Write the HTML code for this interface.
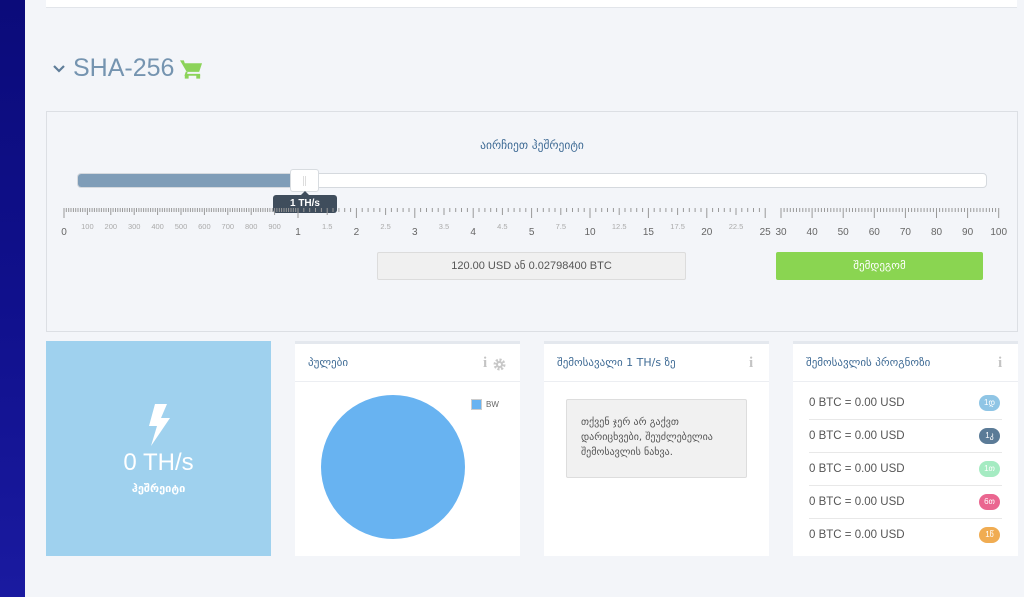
<!DOCTYPE html>
<html><head><meta charset="utf-8"><style>
*{margin:0;padding:0;box-sizing:border-box}
body{width:1024px;height:597px;overflow:hidden;background:#f3f5f9;font-family:"Liberation Sans","DejaVu Sans",sans-serif;position:relative}
.abs{position:absolute}
.side{left:0;top:0;width:25px;height:597px;background:linear-gradient(180deg,#0b0b7a,#10108c 50%,#1a1aa0)}
.top{left:46px;top:0;width:971px;height:8px;background:#fff;border-bottom:1px solid #e2e5ea}
.hdr{left:73px;top:54px;font-size:25px;color:#7594b0}
.panel{left:46px;top:111px;width:972px;height:221px;border:1px solid #dcdfe4;background:#f3f5f9}
.title{left:0;width:1064px;top:138px;text-align:center;font-size:11.5px;color:#3f6b95;font-family:"DejaVu Sans",sans-serif}
.track{left:77px;top:173px;width:910px;height:15px;border-radius:4px;background:#fff;border:1px solid #d5d9de}
.fill{left:78px;top:174px;width:220px;height:13px;border-radius:3px 0 0 3px;background:#7f9db8}
.handle{left:290px;top:169px;width:29px;height:23px;background:#fff;border:1px solid #d8dce0;border-radius:3px}
.tip{left:273px;top:195px;width:64px;height:18px;background:#3f4d5c;border-radius:3px;color:#fff;font-size:10px;font-weight:bold;text-align:center;line-height:18px}
.tip:before{content:"";position:absolute;left:28px;top:-4px;border-left:4px solid transparent;border-right:4px solid transparent;border-bottom:4px solid #3f4d5c}
.price{left:377px;top:252px;width:309px;height:28px;background:#f0f0f0;border:1px solid #dcdcdc;border-radius:2px;text-align:center;line-height:27px;font-size:11px;color:#555}
.btn{left:776px;top:252px;width:207px;height:28px;background:#8ad551;border-radius:2px;text-align:center;line-height:28px;font-size:11px;color:#fff;font-family:"DejaVu Sans",sans-serif}
.card{top:341px;height:215px;width:225px;background:#fff;border-top:3px solid #e4e8ee}
.ch{height:38px;border-bottom:1px solid #eceef2;padding-left:13px;line-height:38px;font-size:11px;color:#3f6b95;font-family:"DejaVu Sans",sans-serif}
.ic{position:absolute;top:11px;color:#c4c4c4;font-size:15px;font-weight:bold;font-family:"Liberation Serif",serif}
.row{position:absolute;left:16px;width:193px;height:33px;border-bottom:1px solid #e8e8e8;font-size:11.5px;color:#555;line-height:33px}
.bd{position:absolute;right:2px;top:8px;width:21px;height:16px;border-radius:8px;color:#fff;font-size:8px;text-align:center;line-height:16px}
</style></head><body>
<div class="abs side"></div>
<div class="abs top"></div>
<svg class="abs" style="left:52px;top:64px" width="14" height="10"><path d="M2 2 L7 7 L12 2" stroke="#5f7d99" stroke-width="2.2" fill="none"/></svg>
<div class="abs hdr">SHA-256</div>
<svg class="abs" style="left:180px;top:59px" width="23" height="21" viewBox="0 0 24 21"><path d="M0 1h4l1 3h18l-3 9H7z" fill="#8cd35a"/><path d="M7 13l-1 3h15" stroke="#8cd35a" stroke-width="2" fill="none"/><rect x="5" y="16" width="4" height="4" fill="#8cd35a"/><rect x="17" y="16" width="4" height="4" fill="#8cd35a"/></svg>
<div class="abs panel"></div>
<div class="abs title">აირჩიეთ ჰეშრეიტი</div>
<div class="abs track"></div>
<div class="abs fill"></div>
<div class="abs handle"><div style="position:absolute;left:12px;top:6px;width:3px;height:10px;border-left:1px solid #ddd;border-right:1px solid #ddd"></div></div>
<div class="abs tip">1 TH/s</div>
<svg id="ruler" class="abs" style="left:0;top:200px" width="1024" height="45"></svg>
<div class="abs price">120.00 USD ან 0.02798400 BTC</div>
<div class="abs btn">შემდეგომ</div>

<div class="abs card" style="left:46px;background:#9fd1ee;border-top:none;height:215px">
<svg style="position:absolute;left:101px;top:63px" width="24" height="42" viewBox="0 0 24 42"><path d="M8 0h12l-6 14h9L4 42l6-20H2z" fill="#fff"/></svg>
<div style="position:absolute;top:108px;width:225px;text-align:center;color:#fff;font-size:24px">0 TH/s</div>
<div style="position:absolute;top:141px;width:225px;text-align:center;color:#fff;font-size:11px;font-weight:bold;font-family:'DejaVu Sans',sans-serif">ჰეშრეიტი</div>
</div>

<div class="abs card" style="left:295px">
<div class="ch">პულები</div><span class="ic" style="left:188px">i</span>
<svg style="position:absolute;left:198px;top:14px" width="13" height="13" viewBox="0 0 13 13"><circle cx="6.5" cy="6.5" r="4.5" fill="none" stroke="#c8c8c8" stroke-width="3" stroke-dasharray="2 1.5"/><circle cx="6.5" cy="6.5" r="3.5" fill="#c8c8c8"/><circle cx="6.5" cy="6.5" r="1.5" fill="#fff"/></svg>
<div style="position:absolute;left:26px;top:51px;width:144px;height:144px;border-radius:50%;background:#68b3f1"></div>
<div style="position:absolute;left:176px;top:55px;width:11px;height:11px;background:#68b3f1;border:1px solid #ccc"></div>
<div style="position:absolute;left:191px;top:56px;font-size:8px;color:#666">BW</div>
</div>

<div class="abs card" style="left:544px">
<div class="ch">შემოსავალი 1 TH/s ზე</div><span class="ic" style="left:205px">i</span>
<div style="position:absolute;left:22px;top:55px;width:181px;height:79px;background:#f1f1f1;border:1px solid #ddd;border-radius:2px;padding:15px 0 0 14px;font-size:10px;line-height:15px;color:#555;font-family:'DejaVu Sans',sans-serif">თქვენ ჯერ არ გაქვთ<br>დარიცხვები, შეუძლებელია<br>შემოსავლის ნახვა.</div>
</div>

<div class="abs card" style="left:793px">
<div class="ch">შემოსავლის პროგნოზი</div><span class="ic" style="left:205px">i</span>
<div class="row" style="top:43px">0 BTC = 0.00 USD<span class="bd" style="background:#8fc5e5">1დ</span></div>
<div class="row" style="top:76px">0 BTC = 0.00 USD<span class="bd" style="background:#5b7b97">1კ</span></div>
<div class="row" style="top:109px">0 BTC = 0.00 USD<span class="bd" style="background:#a5ebc2">1თ</span></div>
<div class="row" style="top:142px">0 BTC = 0.00 USD<span class="bd" style="background:#ea6690">6თ</span></div>
<div class="row" style="top:175px;border-bottom:none">0 BTC = 0.00 USD<span class="bd" style="background:#f0ac52">1წ</span></div>
</div>

<script>
var s=document.getElementById('ruler'),h='';
function tick(x,len,c){h+='<line x1="'+x.toFixed(1)+'" y1="8" x2="'+x.toFixed(1)+'" y2="'+(8+len)+'" stroke="'+c+'" stroke-width="1"/>';}
function lab(x,t,big){h+='<text x="'+x+'" y="'+(big?35:29)+'" font-size="'+(big?10:7.5)+'" fill="'+(big?'#666':'#aaa')+'" text-anchor="middle" font-family="Liberation Sans, sans-serif">'+t+'</text>';}
for(var i=0;i<=100;i++){var x=64+i*2.34;tick(x,i%10==0?(i%100==0?10:7):4,'#999');}
for(var i=1;i<10;i++)lab((64+i*23.4).toFixed(1),i*100,false);
lab(64,'0',true);
for(var i=0;i<=80;i++){var x=298+i*5.84;tick(x,i%5==0?(i%10==0?10:7):4,'#999');}
var l2=['1','1.5','2','2.5','3','3.5','4','4.5','5','7.5','10','12.5','15','17.5','20','22.5','25'];
for(var i=0;i<l2.length;i++)lab((298+i*29.2).toFixed(1),l2[i],i%2==0);
for(var i=0;i<=70;i++){var x=781+i*3.11;tick(x,i%10==0?10:4,'#999');}
var l3=['30','40','50','60','70','80','90','100'];
for(var i=0;i<l3.length;i++)lab((781+i*31.1).toFixed(1),l3[i],true);
s.innerHTML=h;
</script>
</body></html>
